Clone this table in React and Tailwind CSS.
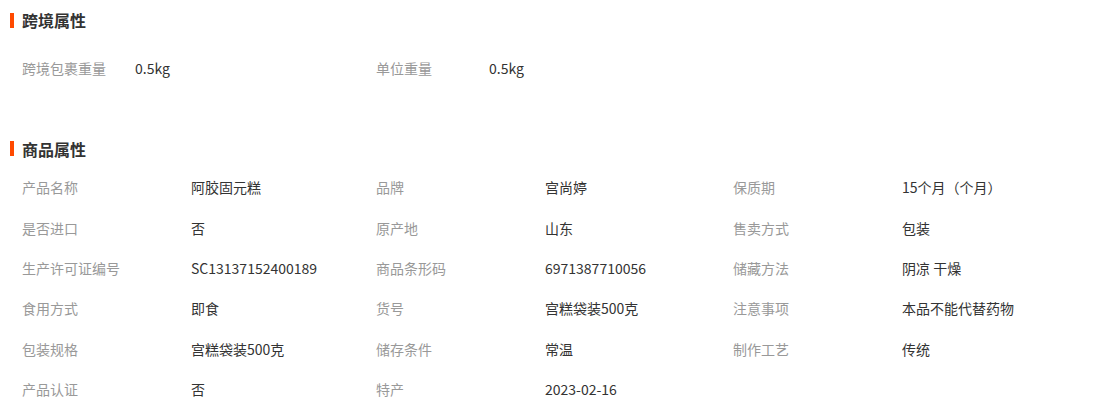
const crossAttrs = [
  ['跨境包裹重量', '0.5kg'],
  ['单位重量', '0.5kg'],
];

const productAttrs = [
  ['产品名称', '阿胶固元糕'],
  ['品牌', '宫尚婷'],
  ['保质期', '15个月（个月）'],
  ['是否进口', '否'],
  ['原产地', '山东'],
  ['售卖方式', '包装'],
  ['生产许可证编号', 'SC13137152400189'],
  ['商品条形码', '6971387710056'],
  ['储藏方法', '阴凉 干燥'],
  ['食用方式', '即食'],
  ['货号', '宫糕袋装500克'],
  ['注意事项', '本品不能代替药物'],
  ['包装规格', '宫糕袋装500克'],
  ['储存条件', '常温'],
  ['制作工艺', '传统'],
  ['产品认证', '否'],
  ['特产', '2023-02-16'],
];

const SectionTitle = ({ children }) => (
  <div className="flex items-center h-10">
    <span className="w-[4px] h-[15px] bg-[#ff4a00]"></span>
    <h2 className="ml-[8px] text-[16px] font-bold text-[#333]">{children}</h2>
  </div>
);

const App = () => {
  return (
    <div
      className="w-[1098px] h-[410px] bg-white overflow-hidden pl-[10px] text-[14px]"
      style={{ fontFamily: '"Noto Sans CJK SC", "Noto Sans", sans-serif' }}
    >
      {/* 跨境属性 */}
      <SectionTitle>跨境属性</SectionTitle>
      <div className="mt-[8px] mb-[40px] pl-[12px] flex h-[40.5px] items-center">
        {crossAttrs.map(([label, value]) => (
          <div key={label} className="flex w-[354px]">
            <span className="w-[113px] text-[#999]">{label}</span>
            <span className="text-[#333]">{value}</span>
          </div>
        ))}
      </div>

      {/* 商品属性 */}
      <SectionTitle>商品属性</SectionTitle>
      <div className="-mt-[1px] pl-[12px] grid grid-cols-[354px_357px_1fr]">
        {productAttrs.map(([label, value]) => (
          <div key={label} className="flex items-center h-[40.4px]">
            <span className="w-[169px] text-[#999]">{label}</span>
            <span className="text-[#333]">{value}</span>
          </div>
        ))}
      </div>
    </div>
  );
};

export default App;
